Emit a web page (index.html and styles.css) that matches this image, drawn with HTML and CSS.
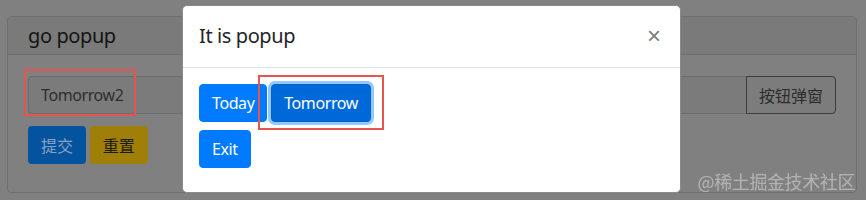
FILE: index.html
```html
<!DOCTYPE html>
<html lang="zh-CN">
<head>
    <meta charset="UTF-8">
    <meta name="viewport" content="width=device-width, initial-scale=1.0">
    <title>go popup</title>
    <link rel="stylesheet" href="styles.css">
</head>
<body>
    <div class="card">
        <div class="card-header">go popup</div>
        <div class="card-body">
            <div class="input-group">
                <input type="text" class="form-control" value="Tomorrow2" readonly>
                <button class="btn btn-outline">按钮弹窗</button>
            </div>
            <div class="actions">
                <button class="btn btn-submit">提交</button>
                <button class="btn btn-reset">重置</button>
            </div>
        </div>
    </div>

    <div class="modal">
        <div class="modal-header">
            <h5 class="modal-title">It is popup</h5>
            <button class="close">&times;</button>
        </div>
        <div class="modal-body">
            <div>
                <button class="btn btn-primary">Today</button>
                <button class="btn btn-primary focused">Tomorrow</button>
            </div>
            <div>
                <button class="btn btn-primary">Exit</button>
            </div>
        </div>
    </div>

    <div class="mark mark-input"></div>
    <div class="mark mark-choice"></div>
    <div class="watermark">@稀土掘金技术社区</div>
</body>
</html>
```

FILE: styles.css
```css
body { margin: 0; background-color: #808080; color: #1a1a1a; font-family: "Noto Sans", "Noto Sans CJK SC", sans-serif; font-size: 16px; line-height: 1.5; letter-spacing: -0.4px; }

.card { margin: 16px 9px 0 7px; border: 1px solid #6f6f6f; border-radius: 4px; }
.card-header { padding: 4px 20px 3px; font-size: 20px; font-weight: 400; line-height: 30px; background-color: #7a7a7a; border-bottom: 1px solid #6f6f6f; border-radius: 3px 3px 0 0; color: #141414; }
.card-body { padding: 21px 20px 20px; }

.input-group { display: flex; }
.form-control { flex: 1; height: 38px; box-sizing: border-box; padding: 6px 12px; border: 1px solid #6c6c6c; border-right: none; border-radius: 4px 0 0 4px; background-color: #7b7b7b; color: #2e2e2e; font: inherit; letter-spacing: inherit; outline: none; }

.btn { display: inline-block; height: 38px; box-sizing: border-box; padding: 6px 12px; border: 1px solid transparent; border-radius: 4px; font: inherit; letter-spacing: inherit; line-height: 24px; cursor: pointer; vertical-align: middle; }
.btn-outline { background-color: #7c7c7c; border-color: #3c3c3c; color: #2b2b2b; border-radius: 0 4px 4px 0; font-family: "Noto Sans CJK SC", sans-serif; letter-spacing: 0; }
.actions { margin-top: 12px; margin-bottom: 8px; }
.btn-submit { background-color: #04539e; color: #8aa2c2; font-family: "Noto Sans CJK SC", sans-serif; letter-spacing: 0; }
.btn-reset { background-color: #a07f08; color: #1c1a12; font-family: "Noto Sans CJK SC", sans-serif; letter-spacing: 0; }

.modal { position: fixed; top: 5px; left: 182px; width: 499px; box-sizing: border-box; background-color: #fff; border: 1px solid #8a8a8a; border-radius: 5px; }
.modal-header { display: flex; align-items: center; justify-content: space-between; padding: 15px 16px 16px; border-bottom: 1px solid #dee2e6; }
.modal-title { margin: 0; font-size: 20px; font-weight: 400; line-height: 30px; color: #212529; }
.close { padding: 0 2px; margin-right: 1px; background: none; border: none; font-size: 24px; font-weight: 400; line-height: 1; color: #7c7c7c; font-family: "Liberation Sans", sans-serif; cursor: pointer; }
.modal-body { padding: 16px 16px 16px; }
.btn-primary { background-color: #007bff; border-color: #007bff; color: #fff; margin-bottom: 8px; }
.btn-primary.focused { background-color: #0069d9; border-color: #0062cc; box-shadow: 0 0 0 3px rgba(38, 143, 255, .5); }

.mark { position: fixed; border: 2px solid #e5544e; box-sizing: border-box; }
.mark-input { left: 24px; top: 69px; width: 112px; height: 47px; }
.mark-choice { left: 258px; top: 75px; width: 126px; height: 55px; }

.watermark { position: fixed; right: 11px; bottom: 8px; font-family: "Noto Sans CJK SC", sans-serif; font-size: 18px; line-height: 22px; color: #b2b2b2; text-shadow: 0 0 1px #8a8a8a; }
```
